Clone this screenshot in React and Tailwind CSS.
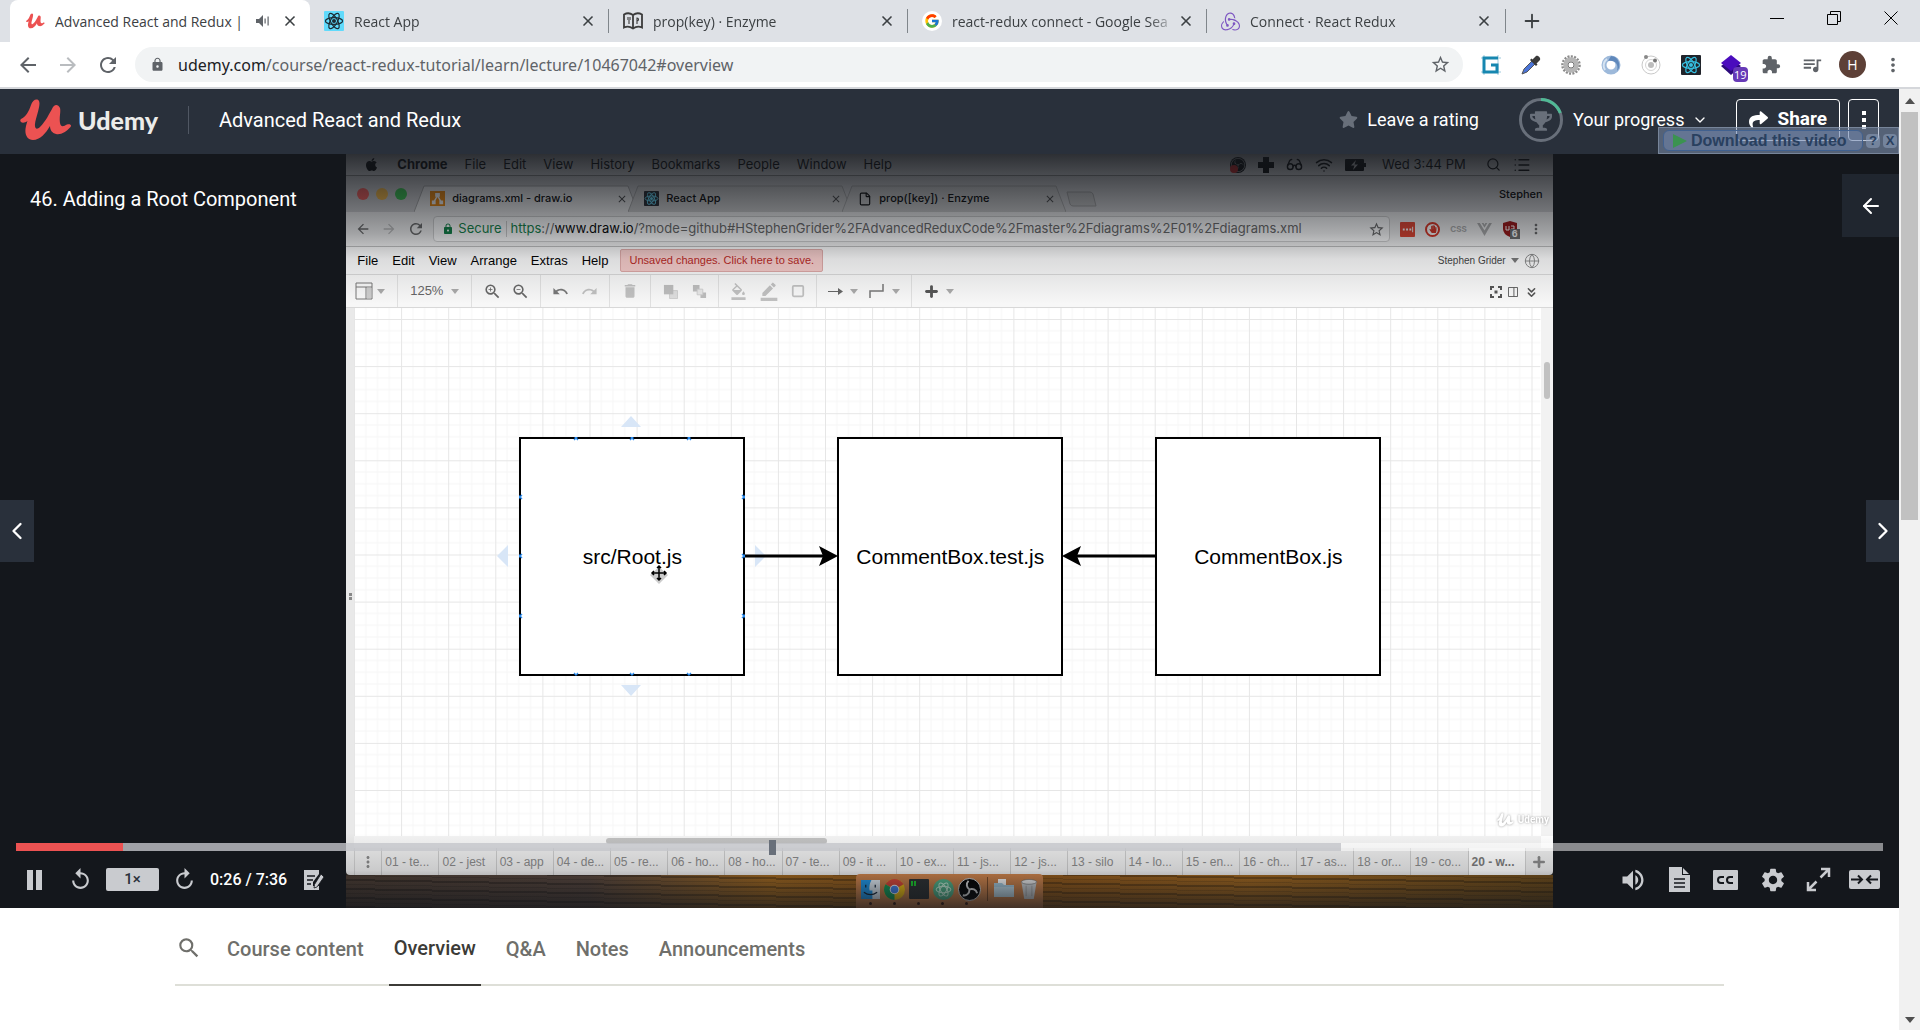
import React from "react";
import { FcGoogle } from "react-icons/fc";
import { SiRedux, SiObsstudio } from "react-icons/si";
import { FaApple, FaShare, FaStar, FaTrophy, FaHandPaper } from "react-icons/fa";
import {
  MdArrowBack, MdArrowForward, MdRefresh, MdLock, MdStarBorder, MdExtension, MdQueueMusic, MdMoreVert,
  MdZoomIn, MdZoomOut, MdUndo, MdRedo, MdDelete, MdFormatColorFill, MdBorderColor,
  MdVolumeUp, MdSettings, MdReplay, MdClose, MdSearch,
} from "react-icons/md";
import { ChevronDown, ChevronLeft, ChevronRight, ArrowLeft, Glasses, Wifi, Search, List, Square, File, Globe, ChevronsDown, Plus, X } from "lucide-react";

const UI = "font-['Open_Sans','Noto_Sans',sans-serif]";

function UdemyMark({ className }) {
  return (
    <svg viewBox="0 0 52 42" className={className} fill="currentColor" aria-hidden="true">
      <path d="M1 20C6 18 9 12 11 6C12.5 1 17-1 19 2C21 6 16 18 15 25C14.5 30 17 31 20 28C26 22 29 15 32 10C34 5 38 5 40 9C41 13 39 18 40 24C41 29 44 27 47 25.5C50 24.5 52 26 50.5 28C46 33 41 36 36 35C32 34 30 31 30 27C26 34 20 41 13 41C7 41 4 35 6 27C6.5 25 7 23 7.5 22C5 24 2 24 1 23C0 22 0 21 1 20Z" />
    </svg>
  );
}

function ReactMark({ className, bg, fg }) {
  return (
    <svg viewBox="0 0 20 20" className={className} aria-hidden="true">
      <rect width="20" height="20" rx="1" fill={bg} />
      <g fill="none" stroke={fg} strokeWidth="1.2">
        <ellipse cx="10" cy="10" rx="8.6" ry="3.4" />
        <ellipse cx="10" cy="10" rx="8.6" ry="3.4" transform="rotate(60 10 10)" />
        <ellipse cx="10" cy="10" rx="8.6" ry="3.4" transform="rotate(120 10 10)" />
      </g>
      <circle cx="10" cy="10" r="2" fill={fg} />
    </svg>
  );
}

function BookMark() {
  return (
    <svg viewBox="0 0 20 18" className="h-[18px] w-5" fill="none" stroke="#3b3b3b" strokeWidth="1.8" aria-hidden="true">
      <path d="M1 2.5C4 .8 7 .8 10 3C13 .8 16 .8 19 2.5V15.5C16 14 13 14.3 10 16.5C7 14.3 4 14 1 15.5ZM10 3V16" />
      <path d="M5 5V8M7 5V8M6 8V12M14 12V6C16 6 16 9 14 9" strokeWidth="1.1" />
    </svg>
  );
}

function Caret({ className = "text-[#a9a9a9]" }) {
  return (
    <svg viewBox="0 0 8 5" className={"h-[5px] w-2 " + className} fill="currentColor" aria-hidden="true">
      <path d="M0 0H8L4 5Z" />
    </svg>
  );
}

const browserTabs = [
  { title: "React App", icon: <ReactMark className="size-5" bg="#61dafb" fg="#1c2b33" /> },
  { title: "prop(key) · Enzyme", icon: <BookMark /> },
  { title: "react-redux connect - Google Sea", icon: <span className="flex size-5 items-center justify-center rounded-full bg-white"><FcGoogle size={16} /></span> },
  { title: "Connect · React Redux", icon: <SiRedux size={19} color="#7e57c2" /> },
];

function TabTitle({ children }) {
  return (
    <span className="min-w-0 flex-1 overflow-hidden whitespace-nowrap [mask-image:linear-gradient(to_right,black_calc(100%-28px),transparent)]">{children}</span>
  );
}

function TabStrip() {
  return (
    <div className={`flex h-[42px] bg-[#dee1e6] pl-[10px] text-[14px] text-[#3c4043] ${UI}`}>
      <div className="flex w-[300px] items-center rounded-t-lg bg-white pr-3 pl-4">
        <UdemyMark className="h-4 w-[19px] text-[#ec5252]" />
        <span className="ml-[10px] w-[188px] overflow-hidden whitespace-nowrap">Advanced React and Redux |</span>
        <svg viewBox="0 0 14 12" className="mr-[12px] ml-auto h-3 w-[14px]" fill="#5f6368" aria-hidden="true">
          <path d="M0 4H3L7 0V12L3 8H0ZM8.5 3.5H9.7V8.5H8.5ZM11.5 1.5H12.7V10.5H11.5Z" />
        </svg>
        <button aria-label="Close tab"><X size={16} strokeWidth={2.5} /></button>
      </div>
      {browserTabs.map((t) => (
        <div key={t.title} className="flex w-[299px] items-center pl-[14px]">
          {t.icon}
          <span className="ml-[10px] flex w-[225px]"><TabTitle>{t.title}</TabTitle></span>
          <button className="ml-px" aria-label="Close tab"><X size={16} strokeWidth={2.5} /></button>
          <span className="ml-auto h-6 w-px bg-[#80868b]" />
        </div>
      ))}
      <button className="ml-[15px]" aria-label="New tab"><Plus size={22} strokeWidth={2} /></button>
      <div className="ml-auto flex items-start gap-[43px] pt-[11px] pr-[22px] text-black">
        <button aria-label="Minimize" className="flex h-[15px] w-[14px] items-center"><span className="h-px w-full bg-black" /></button>
        <button aria-label="Restore">
          <svg viewBox="0 0 14 14" className="size-[14px]" fill="none" stroke="currentColor"><path d="M.5 3.5H10.5V13.5H.5ZM3.5 3.5V.5H13.5V10.5H10.5" /></svg>
        </button>
        <button aria-label="Close">
          <svg viewBox="0 0 14 14" className="size-[14px]" fill="none" stroke="currentColor"><path d="M.5.5L13.5 13.5M13.5.5L.5 13.5" /></svg>
        </button>
      </div>
    </div>
  );
}

function Extensions() {
  return (
    <div className="ml-[18px] flex items-center gap-4 pr-4 text-[#5f6368]">
      <div className="flex items-center gap-5">
        <svg viewBox="0 0 20 20" className="size-5" fill="none"><path d="M0 3H20M0 17H20M3 0V20M17 0V20" stroke="#9fc9dc" /><path d="M17 3H3V17H16V10H10" stroke="#1787b0" strokeWidth="3" /></svg>
        <svg viewBox="0 0 20 20" className="size-5"><path d="M1 19L3 14L11 6L14 9L6 17Z" fill="#4a74d8" stroke="#555" /><path d="M9 5L15 11L16.5 9.5L15.5 8.5L19 5C20 3 17 0 15 1L11.5 4.5L10.5 3.5Z" fill="#3a3a3a" /></svg>
        <svg viewBox="0 0 20 20" className="size-5" fill="none"><circle cx="10" cy="10" r="8.5" stroke="#8b8b8b" strokeWidth="2.6" strokeDasharray="2 1.3" /><circle cx="10" cy="10" r="5.5" stroke="#b5b5b5" strokeWidth="4.5" /><circle cx="10" cy="10" r="3" stroke="#777" /></svg>
        <svg viewBox="0 0 20 20" className="size-5" fill="none"><circle cx="10" cy="10" r="7" stroke="#9db9da" strokeWidth="5" /><path d="M10 1A9 9 0 0 1 16 16C18 9 14 5 7 6Z" fill="#5f88bb" /><path d="M4 15A8 8 0 0 1 6 4" stroke="#d6e4f2" strokeWidth="2" /></svg>
        <svg viewBox="0 0 20 20" className="size-5" fill="none"><circle cx="10" cy="10" r="9" stroke="#c9c9c9" /><circle cx="10" cy="10" r="5.5" stroke="#d5d5d5" /><circle cx="10" cy="10" r="3" fill="#bdbdbd" /><circle cx="14" cy="5.5" r="2" fill="#777" /><circle cx="5" cy="2" r="2" fill="#888" /></svg>
        <ReactMark className="size-5" bg="#20232a" fg="#35bfe0" />
        <span className="relative size-5">
          <svg viewBox="0 0 20 20" className="size-5"><path d="M0 11L10 20L20 11L10 4Z" fill="#2c0a7c" /><path d="M0 8L10 0L20 8L10 16Z" fill="#4a0cbd" /></svg>
          <span className="absolute top-3 left-3 rounded-sm bg-[#673ab7] px-px text-[11px] leading-[15px] text-white">19</span>
        </span>
        <MdExtension size={20} />
        <MdQueueMusic size={22} />
      </div>
      <span className="flex size-[27px] items-center justify-center rounded-full bg-[#5d4037] text-[14px] text-white">H</span>
      <button aria-label="Browser menu"><MdMoreVert size={22} /></button>
    </div>
  );
}

function AddressBar() {
  return (
    <div className={`flex h-[47px] items-center border-b-2 border-[#d5d7db] bg-white pl-4 text-[#5f6368] ${UI}`}>
      <button aria-label="Back"><MdArrowBack size={24} /></button>
      <button aria-label="Forward" className="ml-4 text-[#b9bcbf]"><MdArrowForward size={24} /></button>
      <button aria-label="Reload" className="ml-4"><MdRefresh size={24} /></button>
      <div className="ml-[15px] flex h-[35px] flex-1 items-center rounded-full bg-[#f1f3f4] pr-3 pl-[15px]">
        <MdLock size={15} />
        <p className="ml-[13px] flex-1 font-['Noto_Sans',sans-serif] text-[16px]"><span className="text-[#202124]">udemy.com</span>/course/react-redux-tutorial/learn/lecture/10467042#overview</p>
        <button aria-label="Bookmark"><MdStarBorder size={21} /></button>
      </div>
      <Extensions />
    </div>
  );
}

function CourseHeader() {
  return (
    <header className="flex h-[65px] items-center bg-[#29303b] pr-5 pb-1 pl-5 text-[18px] text-white">
      <a href="#" className="flex items-center" aria-label="Udemy">
        <UdemyMark className="h-[42px] w-[52px] text-[#ec5252]" />
        <span className="ml-[6px] font-['Lato',sans-serif] text-[25px] leading-[30px] font-black text-[#ececea]">Udemy</span>
      </a>
      <span className="ml-[30px] h-7 w-px bg-[#505763]" />
      <a href="#" className="ml-[30px] text-[20px]">Advanced React and Redux</a>
      <button className="ml-auto flex items-center gap-[9px]"><FaStar size={19} className="text-[#686f7a]" />Leave a rating</button>
      <button className="ml-10 flex items-center">
        <svg viewBox="0 0 44 44" className="size-11" fill="none" aria-hidden="true">
          <circle cx="22" cy="22" r="20.5" stroke="#686f7a" strokeWidth="3" />
          <path d="M22 1.5A20.5 20.5 0 0 1 41.3 15" stroke="#50b995" strokeWidth="3" />
          <g transform="translate(11 12)" color="#686f7a"><FaTrophy size={22} /></g>
        </svg>
        <span className="ml-[10px]">Your progress</span>
        <ChevronDown size={16} className="ml-2" />
      </button>
      <button className="ml-7 flex h-[42px] items-center gap-[9px] rounded-sm border border-white px-3 text-[19px] font-bold"><FaShare size={19} />Share</button>
      <button aria-label="More options" className="ml-2 flex h-[42px] w-[31px] flex-col items-center justify-center gap-[3px] rounded-sm border border-white">
        <i className="size-1 bg-white" /><i className="size-1 bg-white" /><i className="size-1 bg-white" />
      </button>
    </header>
  );
}

function MacMenu() {
  return (
    <div className="flex h-[22px] items-center border-b border-[#8b8b8b] bg-[#e0e0e2] pr-[22px] pl-[18px] text-[13px]">
      <FaApple size={15} />
      <div className="ml-[18px] flex gap-[17px]">
        <b>Chrome</b><span>File</span><span>Edit</span><span>View</span><span>History</span><span>Bookmarks</span><span>People</span><span>Window</span><span>Help</span>
      </div>
      <div className="ml-auto flex items-center gap-3">
        <span className="relative flex size-4 items-center justify-center rounded-full bg-black text-[#b5b5b5]">
          <SiObsstudio size={14} />
          <i className="absolute bottom-0 left-0 size-2 rounded-full bg-[#e02020]" />
        </span>
        <svg viewBox="0 0 16 16" className="size-4" fill="currentColor"><path d="M5 0H11V5H16V11H11V16H5V11H0V5H5Z" /></svg>
        <Glasses size={17} /><Wifi size={18} />
        <svg viewBox="0 0 21 12" className="h-3 w-[21px]" fill="currentColor"><path d="M1 0H18Q19 0 19 1V4H21V8H19V11Q19 12 18 12H1Q0 12 0 11V1Q0 0 1 0Z" /><path d="M11 1L6 6.500H9.500L8 11L13 5.500H9.500Z" fill="#e0e0e2" /></svg>
        <span className="ml-1">Wed 3:44 PM</span>
        <Search size={15} className="ml-2" />
        <List size={18} />
      </div>
    </div>
  );
}

function VideoTab({ title, icon, active }) {
  return (
    <div className="relative flex w-[214px] items-center pl-4">
      <svg viewBox="0 0 224 27" preserveAspectRatio="none" className="absolute top-0 left-0 h-full w-[224px]" aria-hidden="true">
        <path d="M0 27L10 1H214L224 27" fill={active ? "#f0f0f0" : "#cfcfcf"} stroke="#a8a8a8" />
      </svg>
      <span className="relative flex flex-1 items-center gap-[7px] text-[11px] font-medium text-black">{icon}{title}</span>
      <MdClose size={12} className="relative text-[#444]" />
    </div>
  );
}

function VideoBrowser() {
  return (
    <>
      <div className="flex h-[36px] items-end bg-[#d2d2d4] pl-[11px]">
        <span className="flex gap-[7px] self-center pb-px">
          <i className="size-3 rounded-full bg-[#fc5b57]" /><i className="size-3 rounded-full bg-[#fdbc40]" /><i className="size-3 rounded-full bg-[#34c84a]" />
        </span>
        <div className="ml-[7px] flex h-[27px]">
          <VideoTab active title="diagrams.xml - draw.io" icon={
            <svg viewBox="0 0 16 16" className="size-[15px]"><rect width="16" height="16" fill="#f08705" /><path d="M8 5L4.500 11M8 5L11.500 11" stroke="#fff" strokeWidth="1.500" /><path d="M5.500 2H10.500V6H5.500ZM2 10H6V14H2ZM10 10H14V14H10Z" fill="#fff" /></svg>
          } />
          <VideoTab title="React App" icon={<ReactMark className="size-[15px]" bg="#20232a" fg="#61dafb" />} />
          <VideoTab title="prop([key]) · Enzyme" icon={<File size={14} />} />
        </div>
        <svg viewBox="0 0 31 16" className="mb-[5px] ml-[10px] h-4 w-[31px]" fill="#c6c6c6" stroke="#a0a0a0"><path d="M1 1H24Q26 1 27 3L30 15H7Q5 15 4 13Z" /></svg>
        <span className="mr-[10px] ml-auto self-center text-[11px] font-medium text-black">Stephen</span>
      </div>
      <div className="flex h-[35px] items-center border-b border-[#bdbdbd] bg-[#f2f2f2] pl-[9px] text-[13px] text-[#666]">
        <MdArrowBack size={16} /><MdArrowForward size={16} className="ml-[10px] text-[#bbb]" /><MdRefresh size={18} className="ml-[10px]" />
        <div className="ml-2 flex h-[26px] flex-1 items-center rounded-sm border border-[#d0d0d0] bg-white pr-1 pl-2">
          <MdLock size={12} className="text-[#0b8043]" />
          <span className="ml-1 text-[#0b8043]">Secure</span>
          <span className="mx-1 h-4 w-px bg-[#ccc]" />
          <p className="flex-1 whitespace-nowrap"><span className="text-[#0b8043]">https</span>://<span className="text-black">www.draw.io</span>/?mode=github#HStephenGrider%2FAdvancedReduxCode%2Fmaster%2Fdiagrams%2F01%2Fdiagrams.xml</p>
          <MdStarBorder size={17} />
        </div>
        <div className="flex items-center gap-[10px] pr-[9px] pl-[10px]">
          <svg viewBox="0 0 16 16" className="size-[15px]"><rect width="16" height="16" rx="1" fill="#e2402c" /><path d="M3 7H5V9H3ZM6.500 7H8.500V9H6.500ZM10 7H12V9H10ZM13 5H14V11H13Z" fill="#fff" /></svg>
          <span className="flex size-[15px] items-center justify-center rounded-full border-2 border-[#d9301f] bg-white text-[#d9301f]"><FaHandPaper size={8} /></span>
          <span className="text-[8px] font-bold text-[#aaa]">CSS</span>
          <svg viewBox="0 0 16 14" className="h-[13px] w-[15px]" fill="#aaa"><path d="M0 0H3L8 8L13 0H16L8 14ZM5 0H7L8 2L9 0H11L8 5Z" /></svg>
          <span className="relative">
            <svg viewBox="0 0 16 16" className="size-4"><path d="M8 0L15 2V8Q15 13 8 16Q1 13 1 8V2Z" fill="#9b1010" /><path d="M4 5V9H7V5M9 5H12V8H9V11" stroke="#fff" fill="none" /></svg>
            <span className="absolute top-2 left-2 bg-[#6b6b6b] px-0.5 text-[9px] leading-[10px] font-bold text-white">6</span>
          </span>
          <MdMoreVert size={16} />
        </div>
      </div>
    </>
  );
}

function DrawMenu() {
  return (
    <div className="flex h-[28px] items-center border-b border-[#d8d8d8] bg-[#f7f7f7] pr-[13px] pl-[11px] font-['Liberation_Sans',Arial,sans-serif] text-[13px] text-black">
      <div className="flex gap-[14px]"><span>File</span><span>Edit</span><span>View</span><span>Arrange</span><span>Extras</span><span>Help</span></div>
      <button className="ml-3 h-[23px] rounded-xs border border-[#dba7a5] bg-[#f2c9c7] px-2 text-[11px] text-[#b62623]">Unsaved changes. Click here to save.</button>
      <span className="ml-auto text-[10px] text-[#444]">Stephen Grider</span>
      <span className="mx-[5px]"><Caret className="text-[#777]" /></span>
      <Globe size={16} strokeWidth={1.5} className="text-[#888]" />
    </div>
  );
}

function LayerIcon({ front }) {
  return (
    <svg viewBox="0 0 16 16" className="size-[15px]" aria-hidden="true">
      {front ? <><path d="M7 7H15.500V15.500H7Z" fill="#ddd" stroke="#ccc" /><path d="M1 1H11V11H1Z" fill="#bcbcbc" /></> : <><path d="M1 1H8V8H1ZM9 9H15V15H9Z" fill="#bcbcbc" /><path d="M5.500 5.500H11.500V11.500H5.500Z" fill="#e6e6e6" stroke="#ccc" /></>}
    </svg>
  );
}

function DrawToolbar() {
  const group = "flex h-full items-center border-r border-[#e0e0e0]";
  return (
    <div className="flex h-[33px] items-center border-b border-[#d8d8d8] bg-[#f7f7f7] text-[#c0c0c0]">
      <div className={group + " w-[52px] gap-1 pl-[9px]"}>
        <svg viewBox="0 0 18 18" className="size-[18px]" fill="none" stroke="#777"><path d="M1 1H17V17H1ZM1 5H17M11 5V17" /><path d="M12 6H16V16H12Z" fill="#ccc" stroke="none" /></svg><Caret />
      </div>
      <div className={group + " w-[74px] justify-center gap-2 font-['Liberation_Sans',Arial,sans-serif] text-[13px] text-[#666]"}>125% <Caret /></div>
      <div className={group + " w-[69px] justify-center gap-[9px] text-[#666]"}><MdZoomIn size={19} /><MdZoomOut size={19} /></div>
      <div className={group + " w-[69px] justify-center gap-3"}><MdUndo size={17} className="text-[#777]" /><MdRedo size={17} /></div>
      <div className={group + " w-[41px] justify-center"}><MdDelete size={18} /></div>
      <div className={group + " w-[68px] justify-center gap-[14px]"}><LayerIcon front /><LayerIcon /></div>
      <div className={group + " w-[98px] justify-center gap-3"}><MdFormatColorFill size={17} /><MdBorderColor size={20} /><Square size={14} strokeWidth={3} /></div>
      <div className={group + " w-[95px] justify-center gap-[7px]"}>
        <svg viewBox="0 0 15 7" className="h-[7px] w-[15px]" fill="#666"><path d="M0 3H10V0L15 3.500L10 7V4H0Z" /></svg><Caret />
        <svg viewBox="0 0 16 16" className="ml-1 size-4" fill="none" stroke="#777" strokeWidth="1.500"><path d="M1 15V8H14V1" /></svg><Caret />
      </div>
      <div className="flex items-center gap-[6px] pl-[11px]"><Plus size={17} strokeWidth={4} className="text-[#555]" /><Caret /></div>
      <div className="ml-auto flex items-center gap-[6px] pr-[14px] pt-0.5 text-[#555]">
        <svg viewBox="0 0 12 12" className="size-3" fill="none" stroke="currentColor" strokeWidth="2"><path d="M1 4V1H4M8 1H11V4M11 8V11H8M4 11H1V8" /><path d="M4.500 4.500H7.500V7.500H4.500Z" fill="currentColor" stroke="none" /></svg>
        <svg viewBox="0 0 11 11" className="size-[10px]" fill="none" stroke="currentColor"><path d="M.5.5H10.500V10.500H.5ZM6.500.5V10.500" /></svg>
        <ChevronsDown size={15} strokeWidth={2.5} />
      </div>
    </div>
  );
}

function Canvas() {
  const node = "absolute top-[129px] flex h-[239px] w-[226px] items-center justify-center border-2 border-black bg-white text-[21px] text-black";
  const ticks = [[57, 1], [113, 1], [170, 1], [57, 238], [113, 238], [170, 238], [1, 60], [1, 119], [1, 179], [225, 60], [225, 119], [225, 179]];
  return (
    <div className="flex min-h-0 flex-1 bg-[#e9e9e9]">
      <div className="flex w-2 flex-col items-center justify-center gap-px pt-[36px]"><i className="size-[3px] bg-[#888]" /><i className="size-[3px] bg-[#888]" /></div>
      <div className="flex min-w-0 flex-1 flex-col">
        <div className="flex min-h-0 flex-1">
          <div className="relative flex-1 overflow-hidden bg-white font-['Liberation_Sans',Arial,sans-serif]">
            <svg className="absolute inset-0 size-full" aria-hidden="true">
              <defs>
                <pattern id="grid" width="47.1" height="47.1" y="11" patternUnits="userSpaceOnUse">
                  <path d="M11.800 0V47M23.500 0V47M35.300 0V47M0 11.800H47M0 23.500H47M0 35.300H47" stroke="#f6f6f6" fill="none" />
                  <path d="M47.100 .5H.5V47.100" stroke="#e6e6e6" fill="none" />
                </pattern>
              </defs>
              <rect width="100%" height="100%" fill="url(#grid)" />
              <g transform="translate(0 1)">
                <path d="M277 107L267 118H287ZM277 387L267 376H287ZM143 247L154 236V258ZM412 247L401 236V258Z" fill="#d8e6f7" />
                <path d="M390 247H472M720 247H802" stroke="#000" strokeWidth="3" />
                <path d="M484 247L465 237L469 247L465 257ZM708 247L727 237L723 247L727 257Z" fill="#000" />
              </g>
            </svg>
            <div className={node + " left-[165px]"}>
              src/Root.js
              <svg viewBox="0 0 226 239" className="absolute -inset-0.5" aria-hidden="true">
                {ticks.map(([x, y]) => <path key={x + "-" + y} d={`M${x - 2} ${y - 2}l4 4m0-4l-4 4`} stroke="#2a8cf0" strokeWidth="1.3" />)}
                <path d="M140 130L149 138L140 147L131 138Z" fill="#ccc" />
                <path d="M140 129V143M133 136H147M138 131L140 129L142 131M138 141L140 143L142 141M135 134L133 136L135 138M145 134L147 136L145 138" stroke="#000" strokeWidth="1.500" fill="none" />
              </svg>
            </div>
            <div className={node + " left-[483px]"}>CommentBox.test.js</div>
            <div className={node + " left-[801px]"}>CommentBox.js</div>
          </div>
          <div className="flex w-3 justify-center bg-[#f2f2f2] pt-[54px]"><span className="h-[37px] w-[6px] rounded-full bg-[#c1c1c1]" /></div>
        </div>
        <div className="flex h-3 bg-[#f3f3f3]">
          <div className="flex-1 pt-[2px] pl-[252px]"><div className="h-[6px] w-[221px] rounded-full bg-[#c0c0c0]" /></div>
          <div className="w-3 bg-white" />
        </div>
      </div>
    </div>
  );
}

const sheets = ["01 - te...", "02 - jest", "03 - app", "04 - de...", "05 - re...", "06 - ho...", "08 - ho...", "07 - te...", "09 - it ...", "10 - ex...", "11 - js...", "12 - js...", "13 - silo", "14 - lo...", "15 - en...", "16 - ch...", "17 - as...", "18 - or...", "19 - co...", "20 - w..."];

function SheetTabs() {
  return (
    <div className="flex h-[27px] rounded-b bg-[#e8e8e8] pl-2 font-['Liberation_Sans',Arial,sans-serif] text-[12px] text-[#858585]">
      <span className="flex w-[27px] items-center justify-center border-l border-[#ccc]"><MdMoreVert size={18} /></span>
      {sheets.map((s, i) => (
        <span key={s} className={"flex min-w-0 flex-1 items-center border-l border-[#c6c6c6] pt-px pl-[3px] whitespace-nowrap " + (i === 19 ? "bg-[#fafafa] font-bold text-[#777]" : "")}>{s}</span>
      ))}
      <span className="flex w-[28px] items-center justify-center border-l border-[#ccc]"><Plus size={16} strokeWidth={4} /></span>
    </div>
  );
}

function ChromeMark() {
  return (
    <svg viewBox="0 0 22 22" className="size-[21px]">
      <circle cx="11" cy="11" r="11" fill="#f4c20d" />
      <path d="M11 11L1.500 5.500A11 11 0 0 1 20.500 5.500Z" fill="#db4437" />
      <path d="M11 11L1.500 5.500A11 11 0 0 0 11 22Z" fill="#0f9d58" />
      <circle cx="11" cy="11" r="5" fill="#fff" /><circle cx="11" cy="11" r="4" fill="#4285f4" />
    </svg>
  );
}

function Dock() {
  return (
    <div className="relative flex h-[33px] justify-center bg-[linear-gradient(to_right,#493a30,#54433a_20%,#a0661c_35%,#8a5014_50%,#a0651c_75%,#6d4a18)]">
      <div className="absolute inset-0 bg-[repeating-linear-gradient(1deg,rgba(0,0,0,0.28)_0_2px,transparent_2px_5px,rgba(0,0,0,0.14)_5px_6px,transparent_6px_9px)]" />
      <div className="relative -mt-px flex h-[34px] items-center gap-1 rounded-t bg-[#cd8148] px-[5px] pb-1">
        <svg viewBox="0 0 20 20" className="size-[19px]"><rect width="20" height="20" fill="#e8f2fa" /><path d="M0 0H11Q8 6 9 11H12V20H0Z" fill="#1e9bf0" /><path d="M5 5V8M15 5V8M3 13Q10 18 17 13" stroke="#123" fill="none" strokeWidth="1.300" /></svg>
        <ChromeMark />
        <svg viewBox="0 0 20 20" className="size-[20px]"><rect width="20" height="20" rx="1" fill="#2b2f30" /><path d="M3 2V7M6 2V7" stroke="#18d02b" strokeWidth="2" /></svg>
        <svg viewBox="0 0 20 20" className="size-[21px]" fill="none" stroke="#c8f3dc"><circle cx="10" cy="10" r="10" fill="#4fb58a" stroke="none" /><ellipse cx="10" cy="10" rx="7" ry="3" /><ellipse cx="10" cy="10" rx="7" ry="3" transform="rotate(60 10 10)" /><ellipse cx="10" cy="10" rx="7" ry="3" transform="rotate(120 10 10)" /></svg>
        <span className="flex size-[23px] items-center justify-center rounded-full border border-[#ddd] bg-black text-white">
          <svg viewBox="0 0 22 22" className="size-[21px]" fill="none" stroke="#ddd" strokeWidth="2" aria-hidden="true">
            <path d="M11 11C8 9 7 5 10 2M11 11C14 9.500 18 11 19 15M11 11C11 15 8 18 4 17" />
          </svg>
        </span>
        <span className="mx-0.5 h-6 w-px bg-[#7d4a24]" />
        <svg viewBox="0 0 20 20" className="size-[20px]"><path d="M4 0H12V8H4Z" fill="#fff" /><path d="M0 4H8L10 6H20V18H0Z" fill="#a9cfe3" /><path d="M0 8H20V18H0Z" fill="#c4dfec" /></svg>
        <svg viewBox="0 0 18 22" className="ml-0.5 h-[21px] w-[18px]"><path d="M1 3H17L14 21H4Z" fill="#cfd3d6" /><ellipse cx="9" cy="3" rx="8" ry="2.500" fill="#eee" stroke="#666" strokeWidth=".6" /><path d="M6 7V18M12 7V18" stroke="#aaa" /></svg>
        <span className="absolute bottom-[3px] left-[13px] flex gap-[21px]">{[1, 2, 3, 4, 5].map((n) => <i key={n} className="size-[3px] rounded-full bg-[#3b1a10]" />)}</span>
      </div>
    </div>
  );
}

function Controls() {
  return (
    <div className="absolute inset-x-0 bottom-0 h-[69px] text-[#c9cbcf]">
      <div className="relative mr-4 ml-4 flex h-[16px] items-center">
        <div className="h-2 w-[107px] bg-[#ec5252]" />
        <div className="h-2 w-[1218px] bg-[#c4c6cb]/80" />
        <div className="h-2 flex-1 bg-white/50" />
        <input type="range" aria-label="Seek" min="0" max="456" defaultValue="26" className="absolute inset-0 w-full opacity-0" />
        <span className="absolute left-[753px] h-[15px] w-[7px] bg-[#686f7a]" />
      </div>
      <div className="flex h-[49px] items-center pr-[19px] pl-[27px]">
        <button aria-label="Pause" className="flex gap-[3px]"><i className="h-5 w-[6px] bg-current" /><i className="h-5 w-[6px] bg-current" /></button>
        <button aria-label="Rewind 5 seconds" className="ml-[26px]"><MdReplay size={25} /></button>
        <button className="ml-[13px] flex h-[23px] w-[53px] items-center justify-center rounded-xs bg-[#c9cbcf] text-[15px] font-medium text-[#29303b]">1×</button>
        <button aria-label="Forward 5 seconds" className="ml-[13px] -scale-x-100"><MdReplay size={25} /></button>
        <span className="ml-[13px] text-[16px] font-medium text-white">0:26 / 7:36</span>
        <button aria-label="Add a note" className="ml-[17px]">
          <svg viewBox="0 0 20 20" className="size-5"><path d="M0 0H15V4L9 12V16H15V20H0Z" fill="currentColor" /><path d="M3 6H11M3 10H9M3 14H7" stroke="#14171c" strokeWidth="1.500" /><path d="M17 4L20 7L13 17L10 18L10.500 14.500Z" fill="currentColor" stroke="#14171c" strokeWidth=".8" /></svg>
        </button>
        <div className="ml-auto flex items-center">
          <button aria-label="Volume"><MdVolumeUp size={28} /></button>
          <button aria-label="Transcript" className="ml-[22px]"><svg viewBox="0 0 21 25" className="h-[25px] w-[21px]" fill="currentColor"><path d="M0 0H13V8H21V25H0Z" /><path d="M14 1L20 7H14Z" /><path d="M5 12H16M5 16H16M5 20H16" stroke="#14171c" strokeWidth="1.500" /></svg></button>
          <button aria-label="Captions" className="ml-[23px]"><svg viewBox="0 0 25 20" className="h-5 w-[25px]"><rect width="25" height="20" rx="1" fill="currentColor" /><path d="M11 7H8Q5 7 5 10Q5 13 8 13H11M20 7H17Q14 7 14 10Q14 13 17 13H20" stroke="#14171c" strokeWidth="2" fill="none" /></svg></button>
          <button aria-label="Settings" className="ml-[21px]"><MdSettings size={28} /></button>
          <button aria-label="Fullscreen" className="ml-[19px]"><svg viewBox="0 0 25 25" className="size-[25px]" fill="none" stroke="currentColor" strokeWidth="2.500"><path d="M15 2H23V10M23 2L14.500 10.500M10 23H2V15M2 23L10.500 14.500" /></svg></button>
          <button aria-label="Exit expanded view" className="ml-[18px]"><svg viewBox="0 0 31 19" className="h-[19px] w-[31px]"><rect width="31" height="19" rx="2" fill="currentColor" /><path d="M2 9.500H13M9 5.500L13 9.500L9 13.500M29 9.500H18M22 5.500L18 9.500L22 13.500" stroke="#14171c" strokeWidth="2" fill="none" /></svg></button>
        </div>
      </div>
    </div>
  );
}

function Player() {
  return (
    <section className="relative flex h-[754px] justify-center overflow-hidden bg-[#14171c]" aria-label="Video player">
      <div className="flex aspect-[16/10] h-full flex-col bg-[#2a2520] font-['Inter',sans-serif]">
        <MacMenu /><VideoBrowser /><DrawMenu /><DrawToolbar /><Canvas /><SheetTabs /><Dock />
      </div>
      <div className="pointer-events-none absolute inset-x-0 top-0 h-[150px] bg-[linear-gradient(to_bottom,rgba(20,23,28,0.88),rgba(20,23,28,0.58)_30%,rgba(20,23,28,0.36)_53%,rgba(20,23,28,0.12)_70%,rgba(20,23,28,0))]" />
      <div className="pointer-events-none absolute inset-x-0 bottom-0 h-[75px] bg-[linear-gradient(to_top,rgba(20,23,28,0.75),rgba(20,23,28,0.14)_50%,rgba(20,23,28,0))]" />
      <div className="absolute right-[350px] bottom-[81px] flex items-center gap-1 text-[10px] font-bold text-white drop-shadow-[0_0_1px_#999]"><UdemyMark className="h-[14px] w-[17px]" />Udemy</div>
      <h1 className="absolute top-[30px] left-[30px] text-[20px] leading-[30px] text-white">46. Adding a Root Component</h1>
      <button aria-label="Show sidebar" className="absolute top-5 right-0 flex h-[63px] w-[57px] items-center justify-center bg-[#20262f] text-white"><ArrowLeft size={24} /></button>
      <button aria-label="Previous lecture" className="absolute top-[346px] left-0 flex h-[62px] w-[34px] items-center justify-center bg-[#29303b] text-white"><ChevronLeft size={28} /></button>
      <button aria-label="Next lecture" className="absolute top-[346px] right-0 flex h-[62px] w-[33px] items-center justify-center bg-[#29303b] text-white"><ChevronRight size={28} /></button>
      <Controls />
    </section>
  );
}

function DownloadBar() {
  return (
    <div className="absolute top-[38px] right-0 flex h-[27px] w-[241px] items-center gap-[3px] border border-[#8d9cb3]/60 bg-[#8193b4]/50 pr-px pl-1 font-['Liberation_Sans',Arial,sans-serif] font-bold text-[#29405f]">
      <button className="flex h-[21px] flex-1 items-center rounded-md border border-[#41618f] bg-[#7a93bd]/40 pl-[9px] text-[16px] whitespace-nowrap">
        <svg viewBox="0 0 14 14" className="mr-1 size-[14px] shrink-0" fill="#3b9350"><path d="M0 0L14 7L0 14Z" /></svg>Download this video
      </button>
      <button aria-label="Help" className="size-[14px] rounded-sm bg-[#94a5c4]/50 text-[13px] leading-[14px]">?</button>
      <button aria-label="Dismiss" className="size-[14px] rounded-sm bg-[#94a5c4]/50 text-[13px] leading-[14px]">X</button>
    </div>
  );
}

const sections = ["Course content", "Overview", "Q&A", "Notes", "Announcements"];

function CourseNav() {
  return (
    <nav className="mx-[175px] flex h-[78px] gap-5 border-b-2 border-[#dedfd8] text-[20px] font-medium text-[#6f6f6b]">
      <button aria-label="Search course" className="ml-px pt-1"><MdSearch size={26} /></button>
      {sections.map((s) => (
        <a key={s} href="#" className={"-mb-0.5 flex items-center px-[5px] pt-1 " + (s === "Overview" ? "border-b-2 border-[#3c3b37] text-[#3c3b37]" : "")}>{s}</a>
      ))}
    </nav>
  );
}

function Scrollbar() {
  return (
    <div className="flex w-[21px] flex-col items-center bg-[#f1f1f1]" aria-hidden="true">
      <span className="flex h-[23px] items-center text-[#505050]"><svg viewBox="0 0 10 6" className="h-[6px] w-[10px]" fill="currentColor"><path d="M5 0L10 6H0Z" /></svg></span>
      <span className="h-[408px] w-[17px] bg-[#c1c1c1]" />
      <span className="mt-auto flex h-5 items-center text-[#505050]"><svg viewBox="0 0 10 6" className="h-[6px] w-[10px]" fill="currentColor"><path d="M5 6L10 0H0Z" /></svg></span>
    </div>
  );
}

export default function App() {
  return (
    <div className="flex min-h-screen flex-col overflow-hidden bg-white font-['Roboto',sans-serif]">
      <TabStrip />
      <AddressBar />
      <div className="flex flex-1">
        <main className="relative min-w-0 flex-1">
          <CourseHeader />
          <DownloadBar />
          <Player />
          <CourseNav />
        </main>
        <Scrollbar />
      </div>
    </div>
  );
}
